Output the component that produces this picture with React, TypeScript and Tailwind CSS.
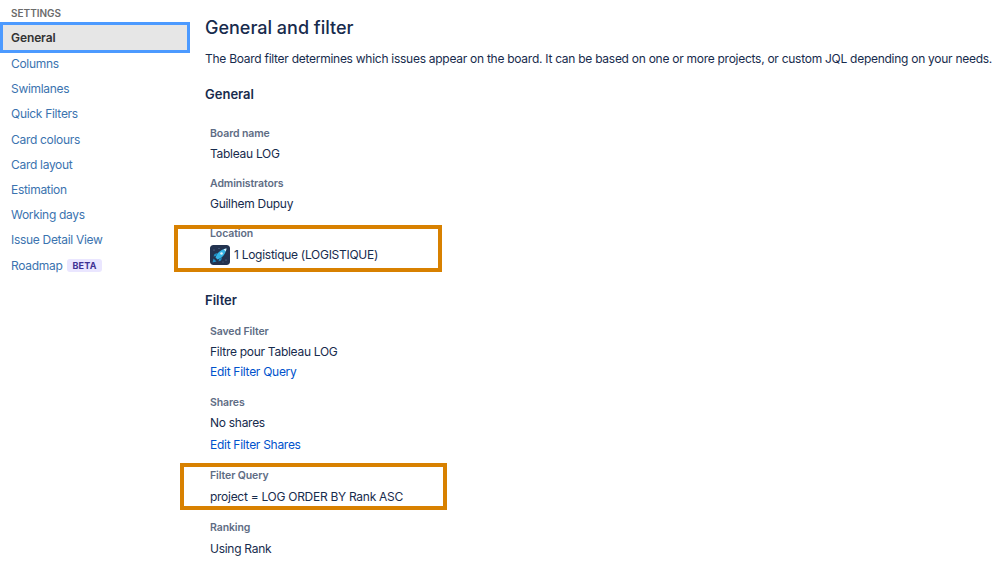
const NAV_LINKS = [
  "Columns",
  "Swimlanes",
  "Quick Filters",
  "Card colours",
  "Card layout",
  "Estimation",
  "Working days",
  "Issue Detail View",
];

const RocketIcon = () => (
  <svg width="20" height="20" viewBox="0 0 20 20" className="shrink-0 rounded-[3px]">
    <rect width="20" height="20" rx="3" fill="#233350" />
    <circle cx="4" cy="5" r="0.6" fill="#6f84a8" />
    <circle cx="16" cy="15" r="0.6" fill="#6f84a8" />
    <circle cx="9" cy="3.5" r="0.5" fill="#6f84a8" />
    <circle cx="13" cy="17" r="0.5" fill="#6f84a8" />
    <path d="M3.5 13.5 L2.5 17.5 L6.5 16.5 Z" fill="#1f8fc4" />
    <path d="M7.5 8 L4.5 9 L3.5 11.5 L6 11 Z" fill="#1f8fc4" />
    <path d="M12 12.5 L11 15.5 L8.5 16.5 L9 14 Z" fill="#1f8fc4" />
    <path d="M5.5 12.5 C7 8 10.5 4.5 16.5 3.5 C15.5 9.5 12 13 7.5 14.5 Z" fill="#35b4e6" />
    <path d="M13.5 4.2 C14.5 3.9 15.5 3.7 16.5 3.5 C16.3 4.5 16.1 5.5 15.8 6.5 Z" fill="#d9f1fb" />
    <circle cx="11.5" cy="8.5" r="1.3" fill="#d9f1fb" />
  </svg>
);

const Field = ({
  label,
  children,
  className = "",
}: {
  label: string;
  children: React.ReactNode;
  className?: string;
}) => (
  <div className={`pl-[5px] ${className}`}>
    <div className="h-5 text-[10.5px] font-semibold leading-5 tracking-[-0.1px] text-[#5e6c84]">{label}</div>
    {children}
  </div>
);

const Value = ({ children }: { children: React.ReactNode }) => (
  <div className="h-5 text-[12px] leading-5 tracking-[-0.28px] text-[#172b4d]">{children}</div>
);

const EditLink = ({ children, className = "" }: { children: React.ReactNode; className?: string }) => (
  <a className={`block h-5 text-[12px] leading-5 tracking-[-0.28px] text-[#0052cc] ${className}`}>{children}</a>
);

const App = () => {
  return (
    <div className="flex h-[569px] w-[998px] overflow-hidden bg-white font-['Inter','Liberation_Sans',sans-serif]">
      <aside className="w-[205px] shrink-0 pr-[15px] pt-[7px]">
        <div className="h-3 pl-[11px] text-[10px] font-semibold leading-3 text-[#6b6b6b]">SETTINGS</div>
        <div className="mt-[3px] flex h-[31px] items-center border-[3px] border-[#4c9aff] bg-[#e6e6e6] pl-2 text-[12px] font-semibold tracking-[-0.1px] text-[#333333]">
          General
        </div>
        <ul className="mt-[-3px]">
          {NAV_LINKS.map((link) => (
            <li
              key={link}
              className="flex h-[25.2px] items-center pl-[11px] pt-[3px] text-[12px] tracking-[-0.3px] text-[#3b73af]"
            >
              {link}
            </li>
          ))}
          <li className="flex h-[25.2px] items-center gap-[5px] pl-[11px] pt-[3px] text-[12px] tracking-[-0.3px] text-[#3b73af]">
            Roadmap
            <span className="rounded-[3px] bg-[#eae6ff] px-[5px] text-[9px] font-bold leading-[13px] tracking-[0.2px] text-[#403294]">
              BETA
            </span>
          </li>
        </ul>
      </aside>
      <main className="min-w-0 flex-1">
        <h1 className="mt-[15px] h-[26px] text-[18px] font-medium leading-[26px] text-[#172b4d]">General and filter</h1>
        <p className="mt-[8px] h-5 whitespace-nowrap text-[12px] leading-5 tracking-[-0.27px] text-[#172b4d]">
          The Board filter determines which issues appear on the board. It can be based on one or more projects, or
          custom JQL depending on your needs.
        </p>
        <h2 className="mt-[15px] h-5 text-[13px] font-semibold leading-5 text-[#172b4d]">General</h2>
        <Field label="Board name" className="mt-[20px]">
          <Value>Tableau LOG</Value>
        </Field>
        <Field label="Administrators" className="mt-[10px]">
          <Value>Guilhem Dupuy</Value>
        </Field>
        <Field label="Location" className="relative mt-[10px]">
          <div className="flex h-[22px] items-center gap-[4px] text-[12px] tracking-[-0.28px] text-[#172b4d]">
            <RocketIcon />
            1 Logistique (LOGISTIQUE)
          </div>
          <div className="absolute left-[-31px] top-[1px] h-[47px] w-[268px] border-[4px] border-[#d88100]" />
        </Field>
        <h2 className="mt-[24px] h-5 text-[13px] font-semibold leading-5 text-[#172b4d]">Filter</h2>
        <Field label="Saved Filter" className="mt-[12px]">
          <Value>Filtre pour Tableau LOG</Value>
          <EditLink>Edit Filter Query</EditLink>
        </Field>
        <Field label="Shares" className="mt-[11px]">
          <Value>No shares</Value>
          <EditLink className="mt-[2px]">Edit Filter Shares</EditLink>
        </Field>
        <Field label="Filter Query" className="relative mt-[11px]">
          <div className="mt-[1px]">
            <Value>project = LOG ORDER BY Rank ASC</Value>
          </div>
          <div className="absolute left-[-25px] top-[-3px] h-[47px] w-[267px] border-[4px] border-[#d88100]" />
        </Field>
        <Field label="Ranking" className="mt-[11px]">
          <div className="mt-[1px]">
            <Value>Using Rank</Value>
          </div>
        </Field>
      </main>
    </div>
  );
};

export default App;
